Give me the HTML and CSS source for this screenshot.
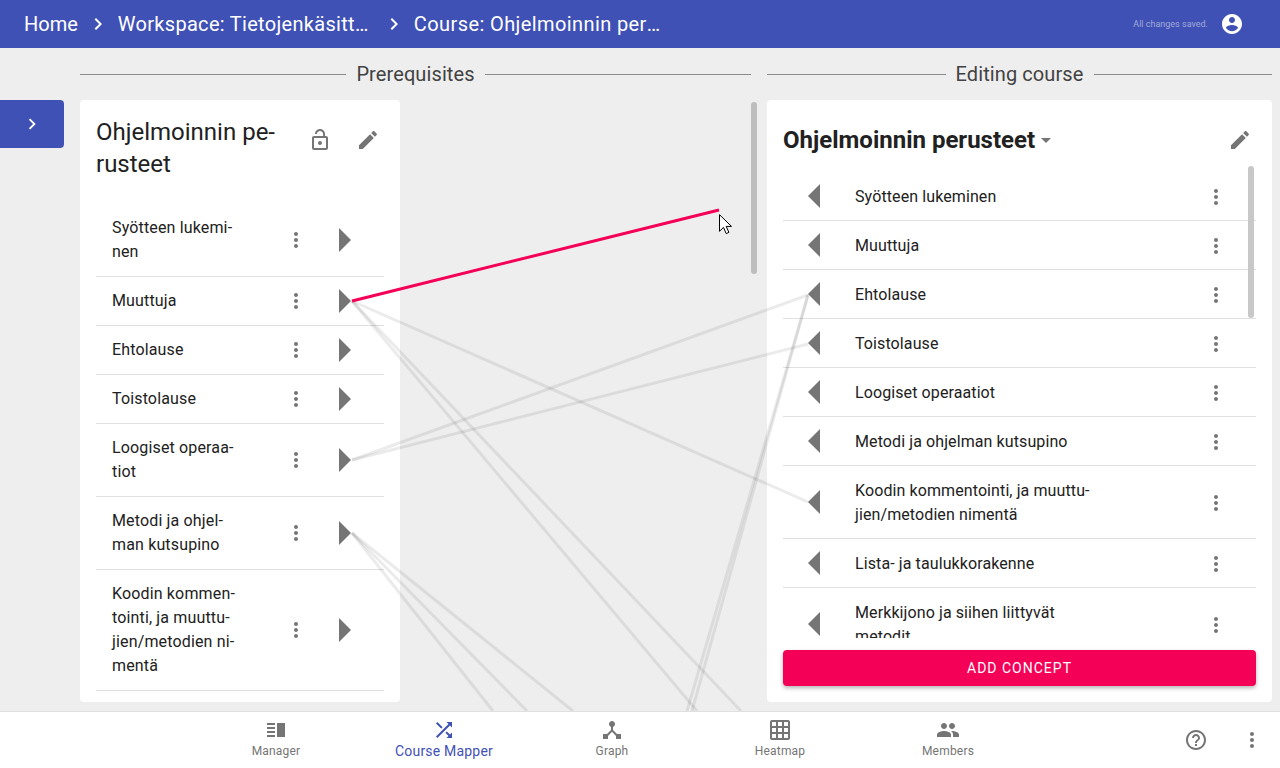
FILE: index.html
```html
<!DOCTYPE html>
<html lang="en">
<head>
  <meta charset="UTF-8" />
  <meta name="viewport" content="width=device-width, initial-scale=1" />
  <title>Course Mapper</title>
  <link rel="stylesheet" href="styles.css">
</head>
<body>
  <!-- Icon sprite -->
  <svg class="sprite" xmlns="http://www.w3.org/2000/svg">
    <symbol id="i-chevron" viewBox="0 0 24 24"><path d="M10 6L8.59 7.41 13.17 12l-4.58 4.59L10 18l6-6z"/></symbol>
    <symbol id="i-account" viewBox="0 0 24 24"><path d="M12 2C6.48 2 2 6.48 2 12s4.48 10 10 10 10-4.48 10-10S17.52 2 12 2zm0 3c1.66 0 3 1.34 3 3s-1.34 3-3 3-3-1.34-3-3 1.34-3 3-3zm0 14.2c-2.5 0-4.71-1.28-6-3.22.03-1.99 4-3.08 6-3.08 1.99 0 5.97 1.09 6 3.08-1.29 1.94-3.5 3.22-6 3.22z"/></symbol>
    <symbol id="i-lock" viewBox="0 0 24 24"><path d="M12 17c1.1 0 2-.9 2-2s-.9-2-2-2-2 .9-2 2 .9 2 2 2zm6-9h-1V6c0-2.76-2.24-5-5-5S7 3.24 7 6h1.9c0-1.71 1.39-3.1 3.1-3.1 1.71 0 3.1 1.39 3.1 3.1v2H6c-1.1 0-2 .9-2 2v10c0 1.1.9 2 2 2h12c1.1 0 2-.9 2-2V10c0-1.1-.9-2-2-2zm0 12H6V10h12v10z"/></symbol>
    <symbol id="i-edit" viewBox="0 0 24 24"><path d="M3 17.25V21h3.75L17.81 9.94l-3.75-3.75L3 17.25zM20.71 7.04c.39-.39.39-1.02 0-1.41l-2.34-2.34c-.39-.39-1.02-.39-1.41 0l-1.83 1.83 3.75 3.75 1.83-1.83z"/></symbol>
    <symbol id="i-caret" viewBox="0 0 24 24"><path d="M7 10l5 5 5-5z"/></symbol>
    <symbol id="i-more" viewBox="0 0 24 24"><path d="M12 8c1.1 0 2-.9 2-2s-.9-2-2-2-2 .9-2 2 .9 2 2 2zm0 2c-1.1 0-2 .9-2 2s.9 2 2 2 2-.9 2-2-.9-2-2-2zm0 6c-1.1 0-2 .9-2 2s.9 2 2 2 2-.9 2-2-.9-2-2-2z"/></symbol>
    <symbol id="i-help" viewBox="0 0 24 24"><path d="M11 18h2v-2h-2v2zm1-16C6.48 2 2 6.48 2 12s4.48 10 10 10 10-4.48 10-10S17.52 2 12 2zm0 18c-4.41 0-8-3.59-8-8s3.59-8 8-8 8 3.59 8 8-3.59 8-8 8zm0-14c-2.21 0-4 1.79-4 4h2c0-1.1.9-2 2-2s2 .9 2 2c0 2-3 1.75-3 5h2c0-2.25 3-2.5 3-5 0-2.21-1.79-4-4-4z"/></symbol>
    <symbol id="i-manager" viewBox="0 0 24 24"><path d="M3 15h8v-2H3v2zm0 4h8v-2H3v2zm0-8h8V9H3v2zm0-6v2h8V5H3zm10 0h8v14h-8V5z"/></symbol>
    <symbol id="i-shuffle" viewBox="0 0 24 24"><path d="M10.59 9.17L5.41 4 4 5.41l5.17 5.17 1.42-1.41zM14.5 4l2.04 2.04L4 18.59 5.41 20 17.96 7.46 20 9.5V4h-5.5zm.33 9.41l-1.41 1.41 3.13 3.13L14.5 20H20v-5.5l-2.04 2.04-3.13-3.13z"/></symbol>
    <symbol id="i-graph" viewBox="0 0 24 24"><path d="M17 16l-4-4V8.82C14.16 8.4 15 7.3 15 6c0-1.66-1.34-3-3-3S9 4.34 9 6c0 1.3.84 2.4 2 2.82V12l-4 4H3v5h5v-3.05l4-4.2 4 4.2V21h5v-5h-4z"/></symbol>
    <symbol id="i-grid" viewBox="0 0 24 24"><path d="M20 2H4c-1.1 0-2 .9-2 2v16c0 1.1.9 2 2 2h16c1.1 0 2-.9 2-2V4c0-1.1-.9-2-2-2zM8 20H4v-4h4v4zm0-6H4v-4h4v4zm0-6H4V4h4v4zm6 12h-4v-4h4v4zm0-6h-4v-4h4v4zm0-6h-4V4h4v4zm6 12h-4v-4h4v4zm0-6h-4v-4h4v4zm0-6h-4V4h4v4z"/></symbol>
    <symbol id="i-group" viewBox="0 0 24 24"><path d="M16 11c1.66 0 2.99-1.34 2.99-3S17.66 5 16 5c-1.66 0-3 1.34-3 3s1.34 3 3 3zm-8 0c1.66 0 2.99-1.34 2.99-3S9.66 5 8 5C6.34 5 5 6.34 5 8s1.34 3 3 3zm0 2c-2.33 0-7 1.17-7 3.5V19h14v-2.5c0-2.33-4.67-3.5-7-3.5zm8 0c-.29 0-.62.02-.97.05 1.16.84 1.97 1.97 1.97 3.45V19h6v-2.5c0-2.33-4.67-3.5-7-3.5z"/></symbol>
  </svg>

  <!-- Top bar -->
  <header class="topbar">
    <nav class="crumbs">
      <a class="crumb crumb-home">Home</a>
      <svg class="icon crumb-sep"><use href="#i-chevron"/></svg>
      <a class="crumb">Workspace: Tietojenkäsittelytiede</a>
      <svg class="icon crumb-sep"><use href="#i-chevron"/></svg>
      <a class="crumb crumb-course">Course: Ohjelmoinnin perusteet</a>
    </nav>
    <span class="save-status">All changes saved.</span>
    <svg class="icon account"><use href="#i-account"/></svg>
  </header>

  <main class="mapper">
    <!-- Drawer toggle -->
    <div class="side">
      <button class="drawer-toggle"><svg class="icon icon-small"><use href="#i-chevron"/></svg></button>
    </div>

    <!-- Prerequisites column -->
    <section class="column column-prereq">
      <h2 class="section-title"><span>Prerequisites</span></h2>
      <div class="card card-prereq">
        <div class="card-head card-head-prereq">
          <h3 class="course-name">Ohjelmoinnin pe&shy;rusteet</h3>
          <span class="icon-btn"><svg class="icon"><use href="#i-lock"/></svg></span>
          <span class="icon-btn"><svg class="icon"><use href="#i-edit"/></svg></span>
        </div>
        <ul class="concepts">
          <li class="concept"><span class="concept-name">Syötteen lukemi&shy;nen</span><svg class="icon concept-menu"><use href="#i-more"/></svg><span class="arrow arrow-right"></span></li>
          <li class="concept"><span class="concept-name">Muuttuja</span><svg class="icon concept-menu"><use href="#i-more"/></svg><span class="arrow arrow-right"></span></li>
          <li class="concept"><span class="concept-name">Ehtolause</span><svg class="icon concept-menu"><use href="#i-more"/></svg><span class="arrow arrow-right"></span></li>
          <li class="concept"><span class="concept-name">Toistolause</span><svg class="icon concept-menu"><use href="#i-more"/></svg><span class="arrow arrow-right"></span></li>
          <li class="concept"><span class="concept-name">Loogiset operaa&shy;tiot</span><svg class="icon concept-menu"><use href="#i-more"/></svg><span class="arrow arrow-right"></span></li>
          <li class="concept"><span class="concept-name">Metodi ja ohjel&shy;man kutsupino</span><svg class="icon concept-menu"><use href="#i-more"/></svg><span class="arrow arrow-right"></span></li>
          <li class="concept"><span class="concept-name">Koodin kommen&shy;tointi, ja muuttu&shy;jien/metodien ni&shy;mentä</span><svg class="icon concept-menu"><use href="#i-more"/></svg><span class="arrow arrow-right"></span></li>
        </ul>
      </div>
      <div class="scrollbar scrollbar-column"></div>
    </section>

    <!-- Editing column -->
    <section class="column column-edit">
      <h2 class="section-title"><span>Editing course</span></h2>
      <div class="card card-edit">
        <div class="card-head card-head-edit">
          <h3 class="course-select">Ohjelmoinnin perusteet</h3>
          <svg class="icon caret"><use href="#i-caret"/></svg>
          <span class="icon-btn icon-btn-end"><svg class="icon"><use href="#i-edit"/></svg></span>
        </div>
        <ul class="concepts concepts-edit">
          <li class="concept"><span class="arrow arrow-left"></span><span class="concept-name">Syötteen lukeminen</span><svg class="icon concept-menu"><use href="#i-more"/></svg></li>
          <li class="concept"><span class="arrow arrow-left"></span><span class="concept-name">Muuttuja</span><svg class="icon concept-menu"><use href="#i-more"/></svg></li>
          <li class="concept"><span class="arrow arrow-left"></span><span class="concept-name">Ehtolause</span><svg class="icon concept-menu"><use href="#i-more"/></svg></li>
          <li class="concept"><span class="arrow arrow-left"></span><span class="concept-name">Toistolause</span><svg class="icon concept-menu"><use href="#i-more"/></svg></li>
          <li class="concept"><span class="arrow arrow-left"></span><span class="concept-name">Loogiset operaatiot</span><svg class="icon concept-menu"><use href="#i-more"/></svg></li>
          <li class="concept"><span class="arrow arrow-left"></span><span class="concept-name">Metodi ja ohjelman kutsupino</span><svg class="icon concept-menu"><use href="#i-more"/></svg></li>
          <li class="concept"><span class="arrow arrow-left"></span><span class="concept-name">Koodin kommentointi, ja muuttu&shy;jien/metodien nimentä</span><svg class="icon concept-menu"><use href="#i-more"/></svg></li>
          <li class="concept"><span class="arrow arrow-left"></span><span class="concept-name">Lista- ja taulukkorakenne</span><svg class="icon concept-menu"><use href="#i-more"/></svg></li>
          <li class="concept"><span class="arrow arrow-left"></span><span class="concept-name">Merkkijono ja siihen liittyvät metodit</span><svg class="icon concept-menu"><use href="#i-more"/></svg></li>
        </ul>
        <div class="scrollbar scrollbar-list"></div>
        <button class="add-concept">Add concept</button>
      </div>
    </section>
  </main>

  <!-- Connections between concepts, drawn over both columns -->
  <svg class="links" viewBox="0 0 1280 768">
    <g class="link-faded">
      <line x1="352" y1="301" x2="808" y2="502"/>
      <line x1="352" y1="301" x2="697" y2="711"/>
      <line x1="352" y1="301" x2="741" y2="711"/>
      <line x1="352" y1="460" x2="808" y2="295"/>
      <line x1="352" y1="460" x2="808" y2="344"/>
      <line x1="352" y1="533" x2="493" y2="711"/>
      <line x1="352" y1="533" x2="527" y2="711"/>
      <line x1="352" y1="533" x2="573" y2="711"/>
      <line x1="808" y1="295" x2="687" y2="711"/>
      <line x1="808" y1="295" x2="692" y2="711"/>
    </g>
    <line class="link-active" x1="352" y1="301" x2="719" y2="210"/>
  </svg>

  <!-- Mouse pointer caught in the screenshot -->
  <svg class="pointer" viewBox="0 0 13 21"><path d="M.5.7v16.6l4-3.9 2.7 6.2 2.7-1.2-2.7-6h5.3z"/></svg>

  <!-- Bottom navigation -->
  <footer class="bottombar">
    <a class="tab"><svg class="icon"><use href="#i-manager"/></svg><span>Manager</span></a>
    <a class="tab tab-active"><svg class="icon"><use href="#i-shuffle"/></svg><span>Course Mapper</span></a>
    <a class="tab"><svg class="icon"><use href="#i-graph"/></svg><span>Graph</span></a>
    <a class="tab"><svg class="icon"><use href="#i-grid"/></svg><span>Heatmap</span></a>
    <a class="tab"><svg class="icon"><use href="#i-group"/></svg><span>Members</span></a>
    <div class="bottom-actions">
      <svg class="icon"><use href="#i-help"/></svg>
      <svg class="icon"><use href="#i-more"/></svg>
    </div>
  </footer>
</body>
</html>
```

FILE: styles.css
```css
/* Basic resets and page frame */
html, body {
  margin: 0;
  padding: 0;
  height: 100%;
  overflow: hidden;
}
body {
  position: relative;
  display: flex;
  flex-direction: column;
  background: #eeeeee;
  color: #212121;
  font-family: Roboto, "Liberation Sans", sans-serif;
}
h2, h3, ul {
  margin: 0;
  padding: 0;
  font-weight: normal;
  list-style: none;
}
.sprite {
  display: none;
}
.icon {
  display: block;
  flex: none;
  width: 24px;
  height: 24px;
  fill: #757575;
}

/* Top bar */
.topbar {
  flex: none;
  display: flex;
  align-items: center;
  height: 48px;
  padding: 0 36px 0 24px;
  background: #3f51b5;
  color: #fff;
}
.crumbs {
  display: flex;
  align-items: center;
  flex: 1;
  min-width: 0;
}
.crumb {
  max-width: 256px;
  overflow: hidden;
  white-space: nowrap;
  text-overflow: ellipsis;
  font-size: 20px;
  line-height: 28px;
  letter-spacing: 0.3px;
}
.crumb-home {
  letter-spacing: 0;
}
.crumb-course {
  letter-spacing: 0.4px;
}
.crumb-sep {
  margin: 0 8px;
  fill: #fff;
}
.save-status {
  margin-right: 12px;
  font-size: 9px;
  color: rgba(255, 255, 255, 0.5);
}
.account {
  fill: #fff;
}

/* Main area */
.mapper {
  flex: 1;
  min-height: 0;
  display: flex;
  padding: 12px 8px 9px 0;
}
.side {
  flex: none;
  width: 80px;
  padding-top: 40px;
}
.drawer-toggle {
  display: flex;
  align-items: center;
  justify-content: center;
  width: 64px;
  height: 48px;
  padding: 0;
  border: none;
  border-radius: 0 4px 4px 0;
  background: #3f51b5;
}
.icon-small {
  width: 22px;
  height: 22px;
  fill: #fff;
}
.column {
  position: relative;
  display: flex;
  flex-direction: column;
}
.column-prereq {
  flex: none;
  width: 671px;
  margin-right: 16px;
}
.column-edit {
  flex: 1;
  min-width: 0;
}

/* Section title with a rule on both sides */
.section-title {
  flex: none;
  display: flex;
  align-items: center;
  height: 28px;
  margin-bottom: 12px;
  font-size: 20px;
  letter-spacing: 0.1px;
  color: #424242;
}
.section-title::before,
.section-title::after {
  content: "";
  flex: 1;
  height: 1px;
  background: #8a8a8a;
}
.section-title span {
  padding: 0 10px;
}

/* Cards */
.card {
  flex: 1;
  min-height: 0;
  position: relative;
  display: flex;
  flex-direction: column;
  padding: 16px;
  border-radius: 4px;
  background: #fff;
}
.card-prereq {
  flex: 1;
  width: 288px;
  padding-bottom: 0;
  overflow: hidden;
}
.card-head {
  flex: none;
  display: flex;
  align-items: flex-start;
}
.card-head-prereq {
  margin-right: -8px;
}
.card-head-edit {
  align-items: center;
  height: 48px;
}
.course-name {
  flex: none;
  width: 200px;
  font-size: 24px;
  line-height: 32px;
  hyphens: manual;
}
.course-select {
  font-size: 24px;
  font-weight: bold;
  line-height: 32px;
}
.caret {
  margin-left: -1px;
}
.icon-btn {
  flex: none;
  display: flex;
  align-items: center;
  justify-content: center;
  width: 48px;
  height: 48px;
}
.icon-btn-end {
  margin-left: auto;
  margin-right: -8px;
}

/* Concept rows */
.concepts {
  margin-top: 24px;
}
.concepts-edit {
  flex: 1;
  min-height: 0;
  overflow: hidden;
  margin-top: 2px;
  padding-top: 6px;
}
.concept {
  display: flex;
  align-items: center;
  padding: 12px 0;
  border-bottom: 1px solid #e0e0e0;
  font-size: 16px;
  line-height: 24px;
  letter-spacing: 0.15px;
}
.concepts-edit .concept {
  padding: 13px 0 11px;
  letter-spacing: 0.1px;
}
.concept-name {
  flex: none;
  width: 132px;
  margin-left: 16px;
  hyphens: manual;
}
.concept-menu {
  margin-left: 40px;
}
.arrow {
  flex: none;
  width: 0;
  height: 0;
  border-top: 12px solid transparent;
  border-bottom: 12px solid transparent;
}
.arrow-right {
  margin-left: 31px;
  border-left: 12px solid #757575;
}
.arrow-left {
  margin-top: -2px;
  margin-left: 25px;
  border-right: 12px solid #757575;
}
.concepts-edit .concept-name {
  width: 245px;
  margin-left: 35px;
}
.concepts-edit .concept-menu {
  margin-left: auto;
  margin-right: 28px;
}

/* Overlay scrollbars */
.scrollbar {
  position: absolute;
  width: 6px;
  border-radius: 3px;
  background: #bdbdbd;
}
.scrollbar-column {
  top: 42px;
  right: -6px;
  height: 172px;
}
.scrollbar-list {
  top: 66px;
  right: 18px;
  height: 152px;
  background: #c8c8c8;
}

.add-concept {
  flex: none;
  height: 36px;
  margin-top: 12px;
  border: none;
  border-radius: 4px;
  background: #f50057;
  color: #fff;
  font-family: inherit;
  font-size: 14px;
  letter-spacing: 1px;
  text-transform: uppercase;
  box-shadow: 0 2px 4px rgba(0, 0, 0, 0.3);
}

/* Connection lines */
.links {
  position: absolute;
  top: 0;
  left: 0;
  width: 1280px;
  height: 768px;
  pointer-events: none;
}
.link-faded line {
  stroke: rgba(0, 0, 0, 0.08);
  stroke-width: 3;
}
.link-active {
  stroke: #f50057;
  stroke-width: 3;
}
.pointer {
  position: absolute;
  top: 214px;
  left: 719px;
  width: 13px;
  height: 21px;
  fill: #fff;
  stroke: #000;
  stroke-width: 1;
}

/* Bottom navigation */
.bottombar {
  position: relative;
  flex: none;
  display: flex;
  height: 56px;
  padding-left: 192px;
  border-top: 1px solid #e0e0e0;
  background: #fff;
}
.tab {
  flex: none;
  width: 168px;
  display: flex;
  flex-direction: column;
  align-items: center;
  padding-top: 6px;
  font-size: 12px;
  line-height: 16px;
  letter-spacing: 0.2px;
  color: #757575;
}
.tab span {
  margin-top: 1px;
}
.tab-active {
  font-size: 14px;
  color: #3f51b5;
}
.tab-active .icon {
  fill: #3f51b5;
}
.bottom-actions {
  display: flex;
  align-items: center;
  gap: 32px;
  margin-left: auto;
  padding-right: 16px;
}
```
